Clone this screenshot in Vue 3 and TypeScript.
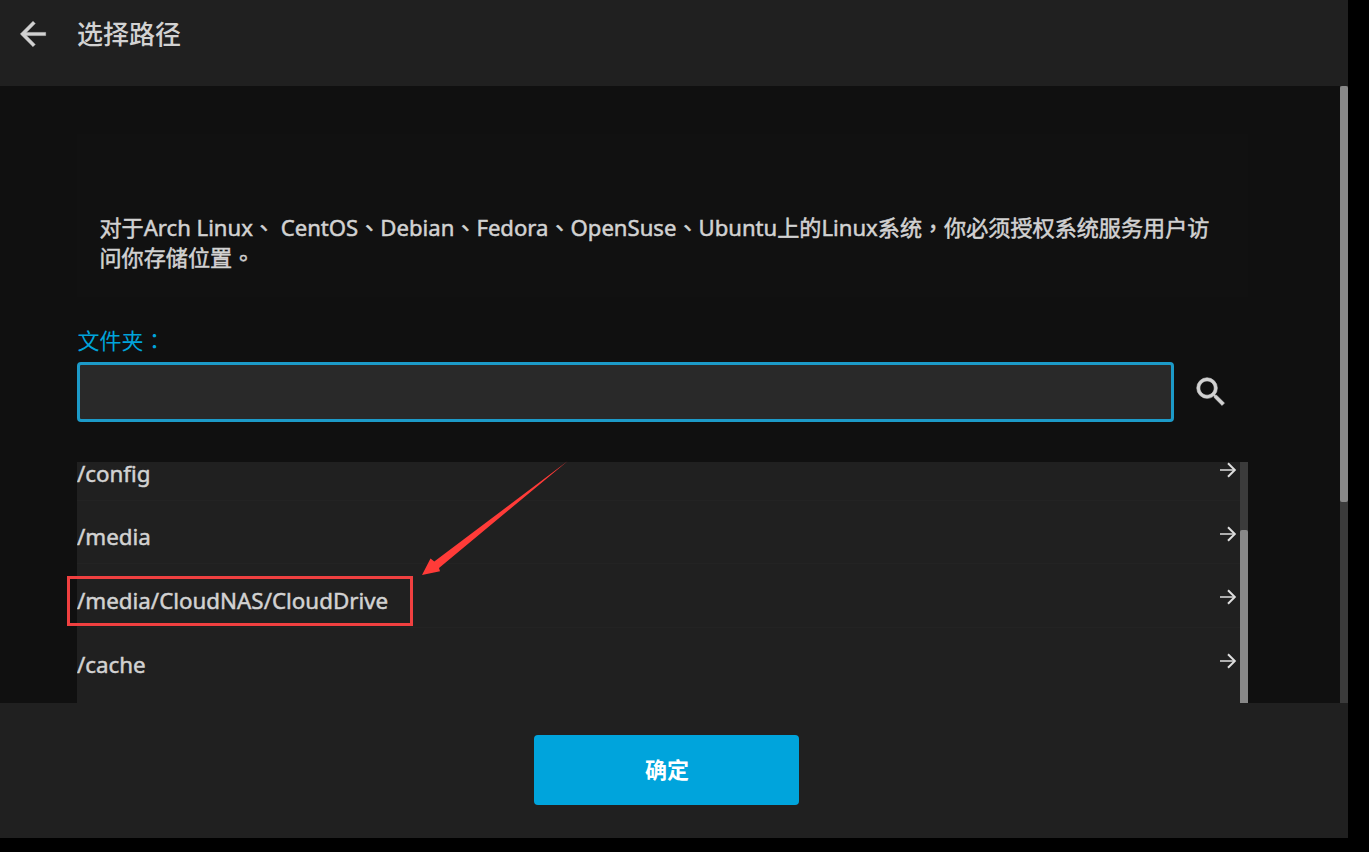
<script setup lang="ts">
interface Folder {
  path: string
}

const folders: Folder[] = [
  { path: '/config' },
  { path: '/media' },
  { path: '/media/CloudNAS/CloudDrive' },
  { path: '/cache' },
]
</script>

<template>
  <div class="dialog">
    <header class="header">
      <svg class="back" viewBox="0 0 24 24">
        <path d="M20 11H7.83l5.59-5.59L12 4l-8 8 8 8 1.41-1.41L7.83 13H20v-2z" />
      </svg>
      <h1 class="title">选择路径</h1>
    </header>

    <main class="body">
      <div class="content">
        <section class="notice">
          <p>对于Arch Linux、 CentOS、Debian、Fedora、OpenSuse、Ubuntu上的Linux系统，你必须授权系统服务用户访<br />问你存储位置。</p>
        </section>

        <label class="label" for="folder">文件夹：</label>
        <div class="field">
          <input id="folder" class="input" type="text" />
          <svg class="search" viewBox="0 0 24 24">
            <path d="M15.5 14h-.79l-.28-.27A6.471 6.471 0 0 0 16 9.5 6.5 6.5 0 1 0 9.5 16c1.61 0 3.09-.59 4.23-1.57l.27.28v.79l5 4.99L20.49 19l-4.99-5zm-6 0C7.01 14 5 11.99 5 9.5S7.01 5 9.5 5 14 7.01 14 9.5 11.99 14 9.5 14z" />
          </svg>
        </div>

        <div class="browser">
          <ul class="list">
            <li v-for="folder in folders" :key="folder.path" class="row">
              <span class="path">{{ folder.path }}</span>
              <svg class="go" viewBox="0 0 18 16">
                <path d="M1 8H15.5" class="shaft" />
                <path d="M9 1.2L15.8 8L9 14.8" class="head" />
              </svg>
            </li>
          </ul>
          <div class="track inner"><div class="thumb"></div></div>
        </div>
      </div>
      <div class="track outer"><div class="thumb"></div></div>
    </main>

    <footer class="footer">
      <button class="ok" type="button">确定</button>
    </footer>

    <div class="highlight"></div>
    <svg class="pointer" viewBox="0 0 146 115">
      <path d="M145.8 0L12.3 100.5L8.5 97.5L0 114L18 110.2L17 107Z" />
    </svg>
  </div>
</template>

<style>
html,
body {
  background: #000;
  overflow: hidden;
}
</style>

<style scoped>
* {
  box-sizing: border-box;
}

.dialog {
  position: relative;
  display: flex;
  flex-direction: column;
  width: 1348px;
  height: 838px;
  background: #202020;
  color: #d2d2d2;
  font-family: 'Noto Sans', 'Noto Sans CJK TC', sans-serif;
  font-size: 22px;
}

.header {
  display: flex;
  align-items: center;
  height: 86px;
  padding: 0 14px 19px;
}

.back {
  width: 38px;
  height: 38px;
  fill: #d2d2d2;
  stroke: #d2d2d2;
  stroke-width: .3;
}

.title {
  margin: 1px 0 0 25px;
  font-size: 26px;
  font-weight: 500;
  line-height: 36px;
}

.body {
  display: flex;
  justify-content: space-between;
  height: 617px;
  background: #101010;
}

.content {
  width: 1171px;
  margin-left: 77px;
  padding-top: 48px;
}

.notice {
  height: 163px;
  padding: 78px 22.5px 0;
  background: #111;
}

.notice p {
  margin: 0;
  font-size: 22.12px;
  line-height: 30px;
  white-space: nowrap;
  -webkit-text-stroke: .5px currentColor;
}

.label {
  display: block;
  height: 30px;
  margin-top: 29px;
  padding-left: .5px;
  color: #00a4dc;
  line-height: 29px;
}

.field {
  display: flex;
  align-items: center;
  margin-top: 6px;
}

.input {
  width: 1096.5px;
  height: 60px;
  padding: 0 12px;
  border: 3.5px solid #1c9ac8;
  border-radius: 4px;
  outline: none;
  background: #292929;
  color: inherit;
  font: inherit;
}

.search {
  width: 38px;
  height: 38px;
  margin-left: 18px;
  fill: #d2d2d2;
  stroke: #d2d2d2;
  stroke-width: .4;
}

.browser {
  display: flex;
  height: 241px;
  margin-top: 40px;
  overflow: hidden;
  background: #202020;
}

.list {
  flex: 1;
  margin: -25px 0 0;
  padding: 0;
  list-style: none;
}

.row {
  display: flex;
  align-items: center;
  justify-content: space-between;
  height: 63.7px;
  padding-right: 3px;
  border-bottom: 1px solid #232323;
}

.row:last-child {
  border-bottom-color: transparent;
}

.path {
  padding-top: 10.6px;
  font-size: 22.35px;
  line-height: 24px;
  -webkit-text-stroke: .5px currentColor;
}

.go {
  width: 18px;
  height: 16px;
  margin-top: 3.4px;
  fill: none;
  stroke: #dedede;
}

.shaft {
  stroke-width: 1.5;
}

.head {
  stroke-width: 2;
}

.track {
  width: 8px;
  background: #3b3b3b;
}

.thumb {
  background: #888;
}

.inner .thumb {
  height: 173px;
  margin-top: 68px;
  border-radius: 2px 2px 0 0;
}

.outer .thumb {
  height: 416px;
  border-radius: 2px;
}

.footer {
  display: flex;
  justify-content: center;
  height: 135px;
  padding: 32px 15px 0 0;
}

.ok {
  width: 265px;
  height: 70px;
  padding: 0 0 4px 1px;
  border: 0;
  border-radius: 4px;
  background: #00a4dc;
  color: #fff;
  font: inherit;
  font-weight: 700;
}

.highlight {
  position: absolute;
  left: 67px;
  top: 576px;
  width: 346px;
  height: 50px;
  border: 3px solid #f04040;
}

.pointer {
  position: absolute;
  left: 422px;
  top: 461px;
  width: 146px;
  height: 115px;
  fill: #ff3b38;
}
</style>
